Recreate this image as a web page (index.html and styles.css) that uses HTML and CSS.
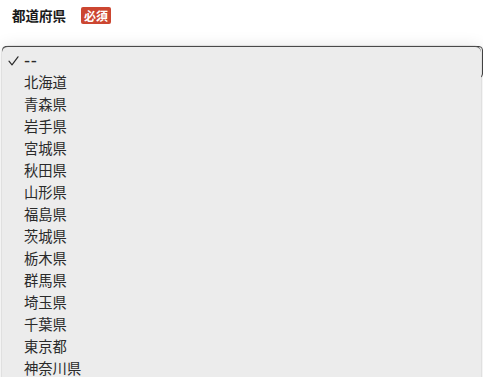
FILE: index.html
```html
<!DOCTYPE html>
<html lang="ja">
<head>
<meta charset="utf-8">
<link rel="stylesheet" href="styles.css">
</head>
<body>
<div class="field">
  <div class="label-row">
    <span class="label">都道府県</span>
    <span class="badge">必須</span>
  </div>
  <div class="select-wrap">
    <div class="select"></div>
    <ul class="menu">
      <li class="selected"><svg class="check" width="11" height="10" viewBox="0 0 11 10"><polyline points="1,5.2 4,8.8 10,0.8" fill="none" stroke="#2a2a2a" stroke-width="1.2" stroke-linecap="round" stroke-linejoin="round"/></svg><span class="dash">--</span></li>
      <li>北海道</li>
      <li>青森県</li>
      <li>岩手県</li>
      <li>宮城県</li>
      <li>秋田県</li>
      <li>山形県</li>
      <li>福島県</li>
      <li>茨城県</li>
      <li>栃木県</li>
      <li>群馬県</li>
      <li>埼玉県</li>
      <li>千葉県</li>
      <li>東京都</li>
      <li>神奈川県</li>
    </ul>
  </div>
</div>
</body>
</html>
```
FILE: styles.css
```css
html, body {
  margin: 0;
  padding: 0;
  background: #ffffff;
  overflow: hidden;
  height: 377px;
}
body {
  font-family: "Noto Sans CJK JP", "Noto Sans", sans-serif;
  color: #222;
}
.field {
  padding: 6px 0 0 0;
}
.label-row {
  display: flex;
  align-items: center;
  gap: 15px;
  padding-left: 12px;
  height: 18px;
}
.label {
  font-size: 13.5px;
  font-weight: 700;
  color: #1a1a1a;
  line-height: 18px;
}
.badge {
  background: #cc4631;
  color: #fff;
  font-size: 12px;
  font-weight: 700;
  line-height: 17px;
  padding: 0 3px;
  border-radius: 2px;
}
.select-wrap {
  position: relative;
  margin-top: 22px;
}
.select {
  height: 30px;
  margin: 0 0 0 2px;
  border: 1px solid #444;
  border-radius: 4px;
}
.menu {
  position: absolute;
  top: 0;
  left: 2px;
  width: 479px;
  margin: 0;
  padding: 2px 0 20px 0;
  list-style: none;
  background: #ececec;
  border-top: 1px solid #4a4a4a;
  border-radius: 6px 6px 0 0;
  box-shadow: 0 0 16px rgba(0, 0, 0, 0.10), 0 0 0 0.5px rgba(0,0,0,0.15);
}
.menu li {
  position: relative;
  height: 22px;
  line-height: 22px;
  padding-left: 22px;
  font-size: 14.3px;
  color: #2a2a2a;
}
.dash {
  font-family: "DejaVu Sans", sans-serif;
  font-size: 17px;
  letter-spacing: 0.5px;
}
.check {
  position: absolute;
  left: 6px;
  top: 7px;
}
```
